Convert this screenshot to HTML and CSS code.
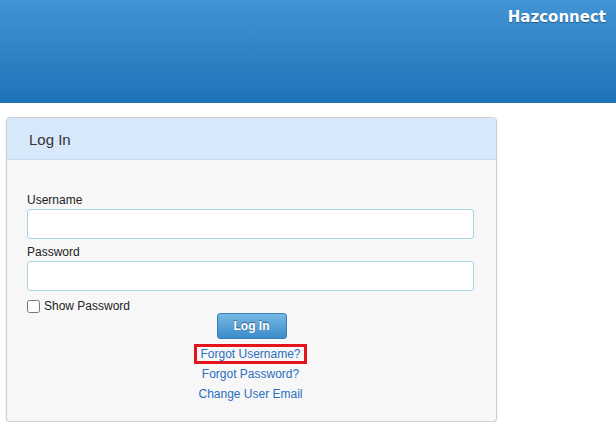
FILE: index.html
```html
<!DOCTYPE html>
<html lang="en">
<head>
  <meta charset="UTF-8">
  <meta name="viewport" content="width=device-width, initial-scale=1.0">
  <title>Hazconnect - Log In</title>
  <link rel="stylesheet" href="styles.css">
</head>
<body>
  <header class="topbar">
    <div class="brand">Hazconnect</div>
  </header>

  <div class="page">
    <div class="login-panel">
      <div class="panel-head">Log In</div>
      <form class="panel-body">
        <label class="field-label" for="username">Username</label>
        <input class="field-input" id="username" type="text">

        <label class="field-label" for="password">Password</label>
        <input class="field-input" id="password" type="password">

        <label class="show-pass">
          <input type="checkbox"> Show Password
        </label>

        <div class="actions">
          <button class="login-btn" type="button">Log In</button>
        </div>

        <div class="links">
          <div class="link-row"><a href="#" class="highlight">Forgot Username?</a></div>
          <div class="link-row"><a href="#">Forgot Password?</a></div>
          <div class="link-row"><a href="#">Change User Email</a></div>
        </div>
      </form>
    </div>
  </div>
</body>
</html>
```

FILE: styles.css
```css
body {
    margin: 0;
    font-family: "Liberation Sans", Arial, sans-serif;
    font-size: 12px;
    color: #222;
    background: #fff;
}

.topbar {
    height: 103px;
    background: linear-gradient(180deg, #4294d4, #1e72b6);
    text-align: right;
    padding-right: 10px;
}

.brand {
    font-family: "DejaVu Sans", Verdana, sans-serif;
    font-weight: bold;
    font-size: 15px;
    color: #fff;
    padding-top: 8px;
    text-shadow: 0 1px 1px rgba(0, 0, 0, 0.35);
}

.page {
    padding: 14px 6px 0;
}

.login-panel {
    width: 489px;
    background: #f7f7f7;
    border: 1px solid #cfcfcf;
    border-radius: 4px;
    box-shadow: 0 1px 2px rgba(0, 0, 0, 0.12);
}

.panel-head {
    height: 41px;
    line-height: 43px;
    padding-left: 22px;
    font-size: 15px;
    color: #333;
    background: #d6e8fa;
    border-bottom: 1px solid #c9dbeb;
    border-radius: 4px 4px 0 0;
}

.panel-body {
    margin: 0;
    padding: 32px 22px 17px 20px;
}

.field-label {
    display: block;
    line-height: 16px;
    margin-bottom: 1px;
    color: #222;
}

.field-input {
    display: block;
    box-sizing: border-box;
    width: 447px;
    height: 30px;
    margin: 0 0 5px;
    border: 1px solid #a8d4e6;
    border-radius: 3px;
    background: #fff;
}

.show-pass {
    display: flex;
    align-items: center;
    gap: 4px;
    margin-top: 8px;
    height: 14px;
    color: #222;
}

.show-pass input {
    margin: 0;
    width: 13px;
    height: 13px;
}

.actions {
    display: flex;
    justify-content: center;
    padding-left: 2px;
}

.login-btn {
    width: 70px;
    height: 26px;
    font-family: "Liberation Sans", Arial, sans-serif;
    font-weight: bold;
    font-size: 12px;
    color: #fff;
    text-shadow: 0 -1px 1px rgba(0, 0, 0, 0.45);
    background: linear-gradient(180deg, #76b8e4, #3c8bc9);
    border: 1px solid #3b80b8;
    border-radius: 3px;
    cursor: pointer;
}

.links {
    margin-top: 5px;
    text-align: center;
}

.link-row {
    line-height: 20px;
}

.links a {
    color: #2a6fc0;
    text-decoration: none;
}

.links a.highlight {
    padding: 0 3px;
    outline: 3px solid #e3141c;
}
```
